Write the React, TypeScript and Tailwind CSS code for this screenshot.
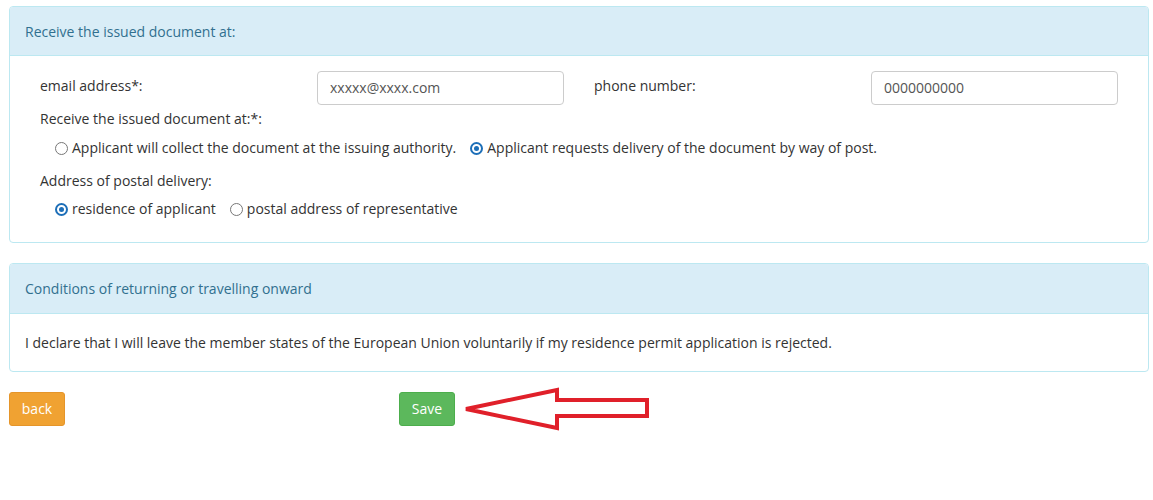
import React from "react";

function Radio({ checked, label }: { checked?: boolean; label: string }) {
  return (
    <label className="flex items-center gap-[4px]">
      {checked ? (
        <span className="flex h-[13px] w-[13px] items-center justify-center rounded-full border-[2px] border-[#1d6fb8] bg-white">
          <span className="h-[5px] w-[5px] rounded-full bg-[#1d6fb8]" />
        </span>
      ) : (
        <span className="h-[13px] w-[13px] rounded-full border border-[#777] bg-white" />
      )}
      <span>{label}</span>
    </label>
  );
}

function Panel({ title, tall, children }: { title: string; tall?: boolean; children: React.ReactNode }) {
  return (
    <div className="rounded-[4px] border border-[#bce8f1] bg-white">
      <div
        className={
          tall
            ? "rounded-t-[3px] border-b border-[#bce8f1] bg-[#d9edf7] px-[15px] pt-[15px] pb-[14px] leading-[20px] text-[#31708f]"
            : "rounded-t-[3px] border-b border-[#bce8f1] bg-[#d9edf7] px-[15px] pt-[15px] pb-[13px] leading-[20px] text-[#31708f]"
        }
      >
        {title}
      </div>
      {children}
    </div>
  );
}

export default function App() {
  return (
    <div
      className="min-h-[500px] bg-white pl-[9px] pr-[4px] pt-[6px] text-[14px] leading-[20px] text-[#333]"
      style={{ fontFamily: '"Open Sans", "Liberation Sans", sans-serif' }}
    >
      <Panel title="Receive the issued document at:">
        <div className="px-[15px] pt-[15px] pb-[23px]">
          <div className="grid grid-cols-4">
            <div className="px-[15px] pt-[5px]">email address*:</div>
            <div className="px-[15px]">
              <div className="h-[34px] rounded-[4px] border border-[#ccc] px-[12px] py-[6px] text-[#555]">
                xxxxx@xxxx.com
              </div>
            </div>
            <div className="px-[15px] pt-[5px]">phone number:</div>
            <div className="px-[15px]">
              <div className="h-[34px] rounded-[4px] border border-[#ccc] px-[12px] py-[6px] text-[#555]">
                0000000000
              </div>
            </div>
          </div>
          <div className="mt-[4px] px-[15px]">Receive the issued document at:*:</div>
          <div className="mt-[9px] flex gap-[14px] pl-[30px]">
            <Radio label="Applicant will collect the document at the issuing authority." />
            <Radio checked label="Applicant requests delivery of the document by way of post." />
          </div>
          <div className="mt-[13px] px-[15px]">Address of postal delivery:</div>
          <div className="mt-[8px] flex gap-[14px] pl-[30px]">
            <Radio checked label="residence of applicant" />
            <Radio label="postal address of representative" />
          </div>
        </div>
      </Panel>
      <div className="mt-[20px]">
        <Panel title="Conditions of returning or travelling onward" tall>
          <div className="px-[15px] pt-[19px] pb-[18px]">
            I declare that I will leave the member states of the European Union voluntarily if my residence permit application is rejected.
          </div>
        </Panel>
      </div>
      <div className="mt-[20px] flex items-start">
        <button className="h-[34px] w-[56px] rounded-[3px] border border-[#e5952a] bg-[#f0a232] text-white">back</button>
        <button className="ml-[334px] h-[34px] w-[56px] rounded-[3px] border border-[#4cae4c] bg-[#5cb85c] text-white">Save</button>
        <svg className="-mt-[6px] ml-[7px]" width="194" height="48" viewBox="0 0 194 48">
          <polygon
            points="4,23 95,4 95,14 185,14 185,30 95,30 95,42"
            fill="none"
            stroke="#e0202a"
            strokeWidth="4"
            strokeLinejoin="miter"
          />
        </svg>
      </div>
    </div>
  );
}
